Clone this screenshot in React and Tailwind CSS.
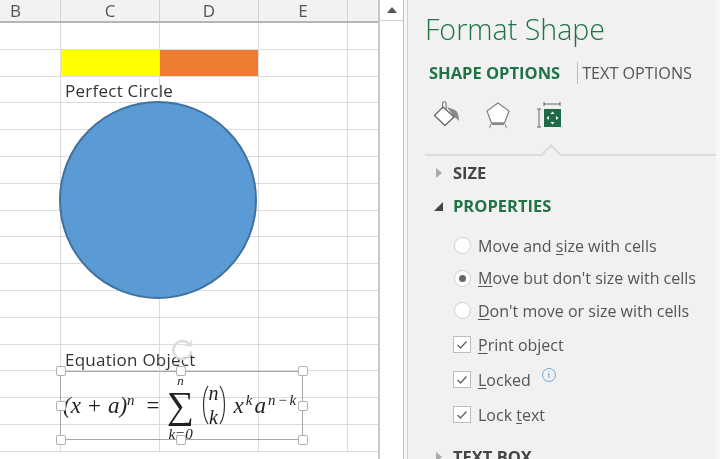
import { Fragment } from 'react';

const columns = [
  { label: 'B', width: 'w-[61px]', pad: 'pr-[29px]' },
  { label: 'C', width: 'w-[99px]', pad: '' },
  { label: 'D', width: 'w-[99px]', pad: '' },
  { label: 'E', width: 'w-[89px]', pad: '' },
  { label: '', width: 'flex-1', pad: '' },
];

const rows = Array.from({ length: 16 }, (_, i) => i);

function SheetRow({ index }) {
  return (
    <div className="flex h-[26.8px] border-b border-[#dcdcdc]">
      {columns.map((col, c) => {
        let fill = '';
        if (index === 1 && c === 1) fill = 'bg-[#ffff00]';
        if (index === 1 && c === 2) fill = 'bg-[#ed7d31]';
        return (
          <div key={c} className={`${col.width} ${fill} relative border-r border-[#dcdcdc] last:border-r-0`}>
            {index === 2 && c === 1 && (
              <span className="absolute left-[4px] top-[3px] whitespace-nowrap text-[17px] leading-[22px] tracking-[0.25px] text-[#333]">Perfect Circle</span>
            )}
            {index === 12 && c === 1 && (
              <span className="absolute left-[4px] top-[4px] whitespace-nowrap text-[17px] leading-[22px] tracking-[0.25px] text-[#333]">Equation Object</span>
            )}
          </div>
        );
      })}
    </div>
  );
}

function Handle({ className }) {
  return <div className={`absolute h-[10px] w-[10px] rounded-[2px] border-[1.5px] border-[#b0b0b0] bg-white ${className}`} />;
}

function Equation() {
  const serif = { fontFamily: '"Liberation Serif", "DejaVu Serif", serif' };
  return (
    <div className="absolute left-[63px] top-[371px] flex h-[68px] items-center whitespace-nowrap text-[#222]" style={serif}>
      <span className="text-[23px] italic leading-none">(x + a)<sup className="text-[15px]">n</sup></span>
      <span className="ml-[12px] text-[23px] leading-none">=</span>
      <div className="relative ml-[6px] flex h-[68px] w-[30px] items-center justify-center">
        <span className="absolute top-[3px] text-[13px] italic leading-none">n</span>
        <span className="text-[38px] leading-none">∑</span>
        <span className="absolute -bottom-[3px] text-[15px] italic leading-none">k=0</span>
      </div>
      <div className="ml-[5px] flex items-center">
        <svg width="8" height="40" viewBox="0 0 8 40" fill="none" stroke="#333" strokeWidth="1.2">
          <path d="M7 1C1 10 1 30 7 39" />
        </svg>
        <div className="flex flex-col items-center text-[20px] italic leading-[24px]">
          <span>n</span>
          <span>k</span>
        </div>
        <svg width="8" height="40" viewBox="0 0 8 40" fill="none" stroke="#333" strokeWidth="1.2">
          <path d="M1 1C7 10 7 30 1 39" />
        </svg>
      </div>
      <span className="ml-[7px] text-[23px] italic leading-none tracking-[2px]">x<sup className="text-[15px]">k</sup>a<sup className="text-[15px]">n−k</sup></span>
    </div>
  );
}

function BucketIcon() {
  return (
    <svg width="30" height="30" viewBox="0 0 30 30" fill="none">
      <path d="M15 7 L23 10 C26 12 27 16 27 21 L25 19 L22 17 Z" fill="#8a8a8a" />
      <path d="M2.5 15.5 L11 7 L22 17 L13 25.5 Z" fill="#fff" stroke="#666" strokeWidth="1.3" strokeLinejoin="round" />
      <path d="M10.5 9V3.5a1.8 1.8 0 0 1 3.6 0V10" stroke="#777" strokeWidth="1.1" />
    </svg>
  );
}

function PentagonIcon() {
  return (
    <svg width="28" height="30" viewBox="0 0 28 30" fill="none">
      <path d="M14 3 L25 11 L20.5 23 L7.5 23 L3 11 Z" fill="#fff" stroke="#888" strokeWidth="1.3" strokeLinejoin="round" />
      <path d="M8 24H20" stroke="#888" strokeWidth="2" />
      <path d="M7 24L5.5 28M21 24L22.5 28" stroke="#aaa" strokeWidth="1.4" />
    </svg>
  );
}

function SizeIcon() {
  return (
    <svg width="26" height="26" viewBox="0 0 26 26" fill="none">
      <path d="M8 2H24M8 0V4M24 0V4" stroke="#666" strokeWidth="1" />
      <rect x="8" y="7" width="17" height="18" fill="#1f6b46" />
      <path d="M1 7H5M1 25H5M3 7V25" stroke="#666" strokeWidth="1" />
      <path d="M16.5 9.5l2 2.5h-4zM16.5 22.5l2-2.5h-4zM10.5 16l2.5-2v4zM22.5 16l-2.5-2v4z" fill="#fff" />
    </svg>
  );
}

function Radio({ checked }) {
  return (
    <div className="flex h-[17px] w-[17px] items-center justify-center rounded-full border border-[#cfcfcf] bg-white">
      {checked && <div className="h-[7px] w-[7px] rounded-full bg-[#666]" />}
    </div>
  );
}

function Checkbox() {
  return (
    <div className="flex h-[17px] w-[18px] items-center justify-center border border-[#bdbdbd] bg-white">
      <svg width="12" height="10" viewBox="0 0 12 10" fill="none" stroke="#666" strokeWidth="1.4">
        <path d="M1.5 5 L4.5 8 L10.5 1.5" />
      </svg>
    </div>
  );
}

function Label({ before, mark, after }) {
  return (
    <span className="whitespace-nowrap text-[16px] leading-none text-[#555]">
      {before}
      <span className="underline underline-offset-2">{mark}</span>
      {after}
    </span>
  );
}

const radios = [
  { before: 'Move and ', mark: 's', after: 'ize with cells', h: 'h-[33px]' },
  { before: '', mark: 'M', after: "ove but don't size with cells", checked: true, h: 'h-[32px]' },
  { before: '', mark: 'D', after: "on't move or size with cells", h: 'h-[33px]' },
];

const checks = [
  { before: '', mark: 'P', after: 'rint object' },
  { before: '', mark: 'L', after: 'ocked', info: true },
  { before: 'Lock ', mark: 't', after: 'ext' },
];

export default function App() {
  return (
    <div className="flex h-[459px] w-[720px] overflow-hidden bg-[#f7f7f7] blur-[0.6px]" style={{ fontFamily: '"Open Sans", "Noto Sans", sans-serif' }}>
      {/* Worksheet */}
      <div className="relative w-[380px] shrink-0 border-r-2 border-[#c8c8c8] bg-white">
        <div className="flex h-[23px] border-b-2 border-[#b5b5b5] bg-[#f2f2f2]">
          {columns.map((col, i) => (
            <div key={i} className={`${col.width} ${col.pad} flex items-center justify-center border-r border-[#d0d0d0] text-[17px] text-[#555] last:border-r-0`}>
              {col.label}
            </div>
          ))}
        </div>
        {rows.map((r) => (
          <SheetRow key={r} index={r} />
        ))}

        {/* Shapes sitting on the sheet */}
        <div className="absolute left-[59px] top-[101px] h-[198px] w-[198px] rounded-full border-2 border-[#41719c] bg-[#5b9bd5]" />
        <div className="absolute left-[60px] top-[371px] h-[69px] w-[243px] border-[1.5px] border-[#a6a6a6]" />
        <Equation />
        <Handle className="left-[56px] top-[366px]" />
        <Handle className="left-[176px] top-[366px]" />
        <Handle className="left-[298px] top-[366px]" />
        <Handle className="left-[56px] top-[401px]" />
        <Handle className="left-[298px] top-[401px]" />
        <Handle className="left-[56px] top-[435px]" />
        <Handle className="left-[176px] top-[435px]" />
        <Handle className="left-[298px] top-[435px]" />
        <svg className="absolute left-[171px] top-[337px]" width="24" height="24" viewBox="0 0 24 24" fill="none" stroke="#dcdcdc" strokeWidth="2.5">
          <path d="M19 8A9 9 0 1 0 20.5 14" />
          <path d="M14 8L20 9L20.5 3" strokeWidth="1.5" />
        </svg>
      </div>

      {/* Scrollbar */}
      <div className="flex w-[24px] shrink-0 flex-col border-r border-[#bfbfbf] bg-white">
        <div className="flex h-[21px] items-center justify-center border-b border-[#d0d0d0] bg-white">
          <div className="h-0 w-0 border-x-[5px] border-b-[6px] border-x-transparent border-b-[#555]" />
        </div>
        <div className="flex-1 bg-white" />
      </div>

      {/* Format Shape pane */}
      <div className="ml-[3px] w-[309px] shrink-0 border-l border-[#d0d0d0] bg-[#f1f1f1] pl-[17px]">
        <h1 className="mt-[11px] text-[28.6px] font-light leading-[36px] text-[#217346]">Format Shape</h1>
        <div className="mt-[13px] flex h-[26px] items-center">
          <span className="ml-[4px] text-[16.5px] font-bold text-[#217346]">SHAPE OPTIONS</span>
          <div className="ml-[17px] h-[22px] w-px bg-[#bdbdbd]" />
          <span className="ml-[4px] text-[16.2px] text-[#555]">TEXT OPTIONS</span>
        </div>
        <div className="mt-[12px] flex h-[34px] items-center">
          <div className="ml-[7px]"><BucketIcon /></div>
          <div className="ml-[22px]"><PentagonIcon /></div>
          <div className="ml-[24px]"><SizeIcon /></div>
        </div>
        <div className="relative mt-[22px] h-[2px] bg-[#dcdcdc]">
          <div className="absolute -top-[7px] left-[119px] h-[14px] w-[14px] rotate-45 border-l-2 border-t-2 border-[#dcdcdc] bg-[#f1f1f1]" />
        </div>
        <div className="relative mt-[7px] flex h-[20px] items-center">
          <div className="ml-[11px] h-0 w-0 border-y-[5px] border-l-[6px] border-y-transparent border-l-[#aaa]" />
          <span className="ml-[11px] text-[16.5px] font-bold text-[#444]">SIZE</span>
        </div>
        <div className="mt-[13px] flex h-[20px] items-center">
          <div className="ml-[9px] h-0 w-0 border-b-[9px] border-l-[9px] border-b-[#444] border-l-transparent" />
          <span className="ml-[10px] text-[16.5px] font-bold text-[#217346]">PROPERTIES</span>
        </div>
        <div className="ml-[29px] mt-[13px]">
          {radios.map((r) => (
            <div key={r.after} className={`flex items-center gap-[7px] ${r.h}`}>
              <Radio checked={r.checked} />
              <Label before={r.before} mark={r.mark} after={r.after} />
            </div>
          ))}
          {checks.map((c) => (
            <div key={c.after} className="-ml-[1px] flex h-[35px] items-center gap-[7px]">
              <Checkbox />
              <Label before={c.before} mark={c.mark} after={c.after} />
              {c.info && (
                <Fragment>
                  <div className="-mt-[10px] ml-[4px] flex h-[14px] w-[14px] items-center justify-center rounded-full border border-[#7aa7d9] text-[9px] leading-none text-[#4f86c6]">i</div>
                </Fragment>
              )}
            </div>
          ))}
        </div>
        <div className="mt-[15px] flex h-[20px] items-center">
          <div className="ml-[11px] h-0 w-0 border-y-[5px] border-l-[6px] border-y-transparent border-l-[#aaa]" />
          <span className="ml-[11px] text-[16.5px] font-bold text-[#444]">TEXT BOX</span>
        </div>
      </div>
    </div>
  );
}
